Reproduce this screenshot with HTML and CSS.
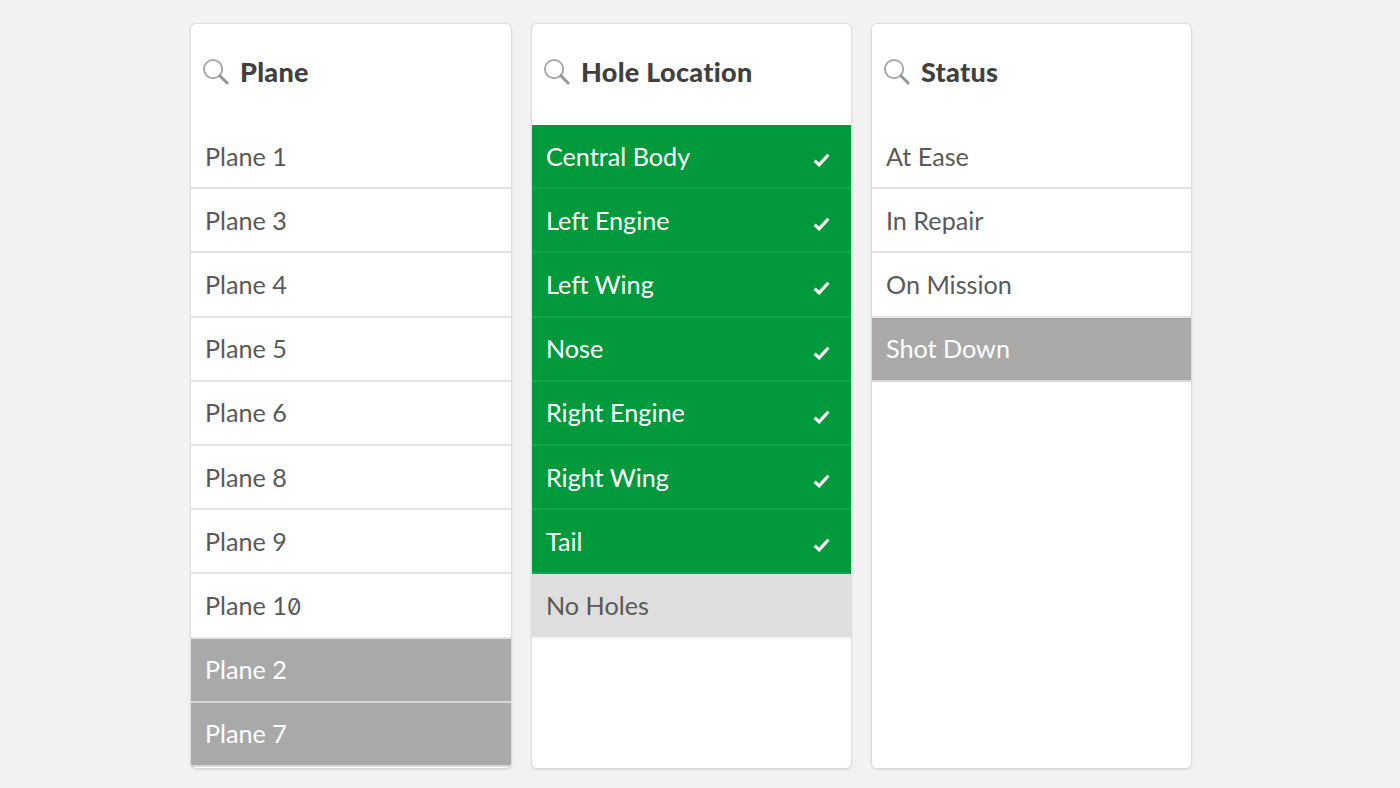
FILE: index.html
```html
<!DOCTYPE html>
<html lang="en">
<head>
<meta charset="utf-8">
<title>Filter panes</title>
<link rel="stylesheet" href="styles.css">
</head>
<body>
<svg class="defs" width="0" height="0" aria-hidden="true">
  <symbol id="search" viewBox="0 0 28 28">
    <circle cx="11.5" cy="11.5" r="9.5" fill="none" stroke="#a3a8ab" stroke-width="2"/>
    <path d="M18.5 18.5L26 26" fill="none" stroke="#8f9599" stroke-width="3" stroke-linecap="round"/>
  </symbol>
  <symbol id="check" viewBox="0 0 16 14">
    <path d="M1.5 8L5.8 12L14.5 2.5" fill="none" stroke="#fff" stroke-width="3"/>
  </symbol>
</svg>
<main class="panes">
  <section class="card">
    <header class="head"><svg class="search"><use href="#search"/></svg><h2>Plane</h2></header>
    <ul class="list">
      <li class="row"><span>Plane 1</span></li>
      <li class="row"><span>Plane 3</span></li>
      <li class="row"><span>Plane 4</span></li>
      <li class="row"><span>Plane 5</span></li>
      <li class="row"><span>Plane 6</span></li>
      <li class="row"><span>Plane 8</span></li>
      <li class="row"><span>Plane 9</span></li>
      <li class="row"><span class="ten">Plane 1<span class="zero">0</span></span></li>
      <li class="row alt"><span>Plane 2</span></li>
      <li class="row alt"><span>Plane 7</span></li>
    </ul>
  </section>
  <section class="card">
    <header class="head"><svg class="search"><use href="#search"/></svg><h2>Hole Location</h2></header>
    <ul class="list">
      <li class="row sel"><span>Central Body</span><svg class="check"><use href="#check"/></svg></li>
      <li class="row sel"><span>Left Engine</span><svg class="check"><use href="#check"/></svg></li>
      <li class="row sel"><span>Left Wing</span><svg class="check"><use href="#check"/></svg></li>
      <li class="row sel"><span>Nose</span><svg class="check"><use href="#check"/></svg></li>
      <li class="row sel"><span>Right Engine</span><svg class="check"><use href="#check"/></svg></li>
      <li class="row sel"><span>Right Wing</span><svg class="check"><use href="#check"/></svg></li>
      <li class="row sel"><span>Tail</span><svg class="check"><use href="#check"/></svg></li>
      <li class="row opt"><span>No Holes</span></li>
    </ul>
  </section>
  <section class="card">
    <header class="head"><svg class="search"><use href="#search"/></svg><h2>Status</h2></header>
    <ul class="list">
      <li class="row"><span>At Ease</span></li>
      <li class="row"><span>In Repair</span></li>
      <li class="row"><span>On Mission</span></li>
      <li class="row alt"><span>Shot Down</span></li>
    </ul>
  </section>
</main>
</body>
</html>
```
FILE: styles.css
```css
* { box-sizing: border-box; }
html, body { margin: 0; height: 100%; }
body {
  background: #f2f2f2;
  font-family: "Lato", "Noto Sans", sans-serif;
  color: #595959;
  overflow: hidden;
}
.defs { position: absolute; }
.panes {
  display: grid;
  grid-template-columns: 322px 321px 321px;
  gap: 19px;
  padding: 23px 0 0 190px;
}
.card {
  height: 746px;
  background: #fff;
  border: 1px solid #dcdcdc;
  border-radius: 6px;
  box-shadow: 0 1px 2px rgba(0,0,0,.1);
  overflow: hidden;
}
.head {
  height: 101px;
  display: flex;
  align-items: center;
  gap: 11px;
  padding: 0 0 6px 11px;
}
.search { width: 27px; height: 27px; }
.head h2 {
  margin: 0;
  font-size: 27px;
  font-weight: 900;
  letter-spacing: .3px;
  color: #404040;
}
.list { list-style: none; margin: 0; padding: 0; }
.row {
  height: 64.2px;
  display: flex;
  align-items: center;
  justify-content: space-between;
  padding: 0 21px 1px 14px;
  font-size: 25.2px;
  border-bottom: 2px solid #e3e3e3;
}
.alt { background: #a9a9a9; color: #fff; border-bottom-color: #d8d8d8; }
.sel { background: #009a3d; color: #fff; border-bottom-color: #0aa84a; }
.opt { background: #dedede; border-bottom-color: #f4f4f4; }
.check { width: 17px; height: 15px; margin-top: 8px; }
.ten { line-height: 31px; padding-top: 2px; }
.zero { font-family: "Inter", sans-serif; font-feature-settings: "zero"; font-size: 23px; line-height: 1; }
```
